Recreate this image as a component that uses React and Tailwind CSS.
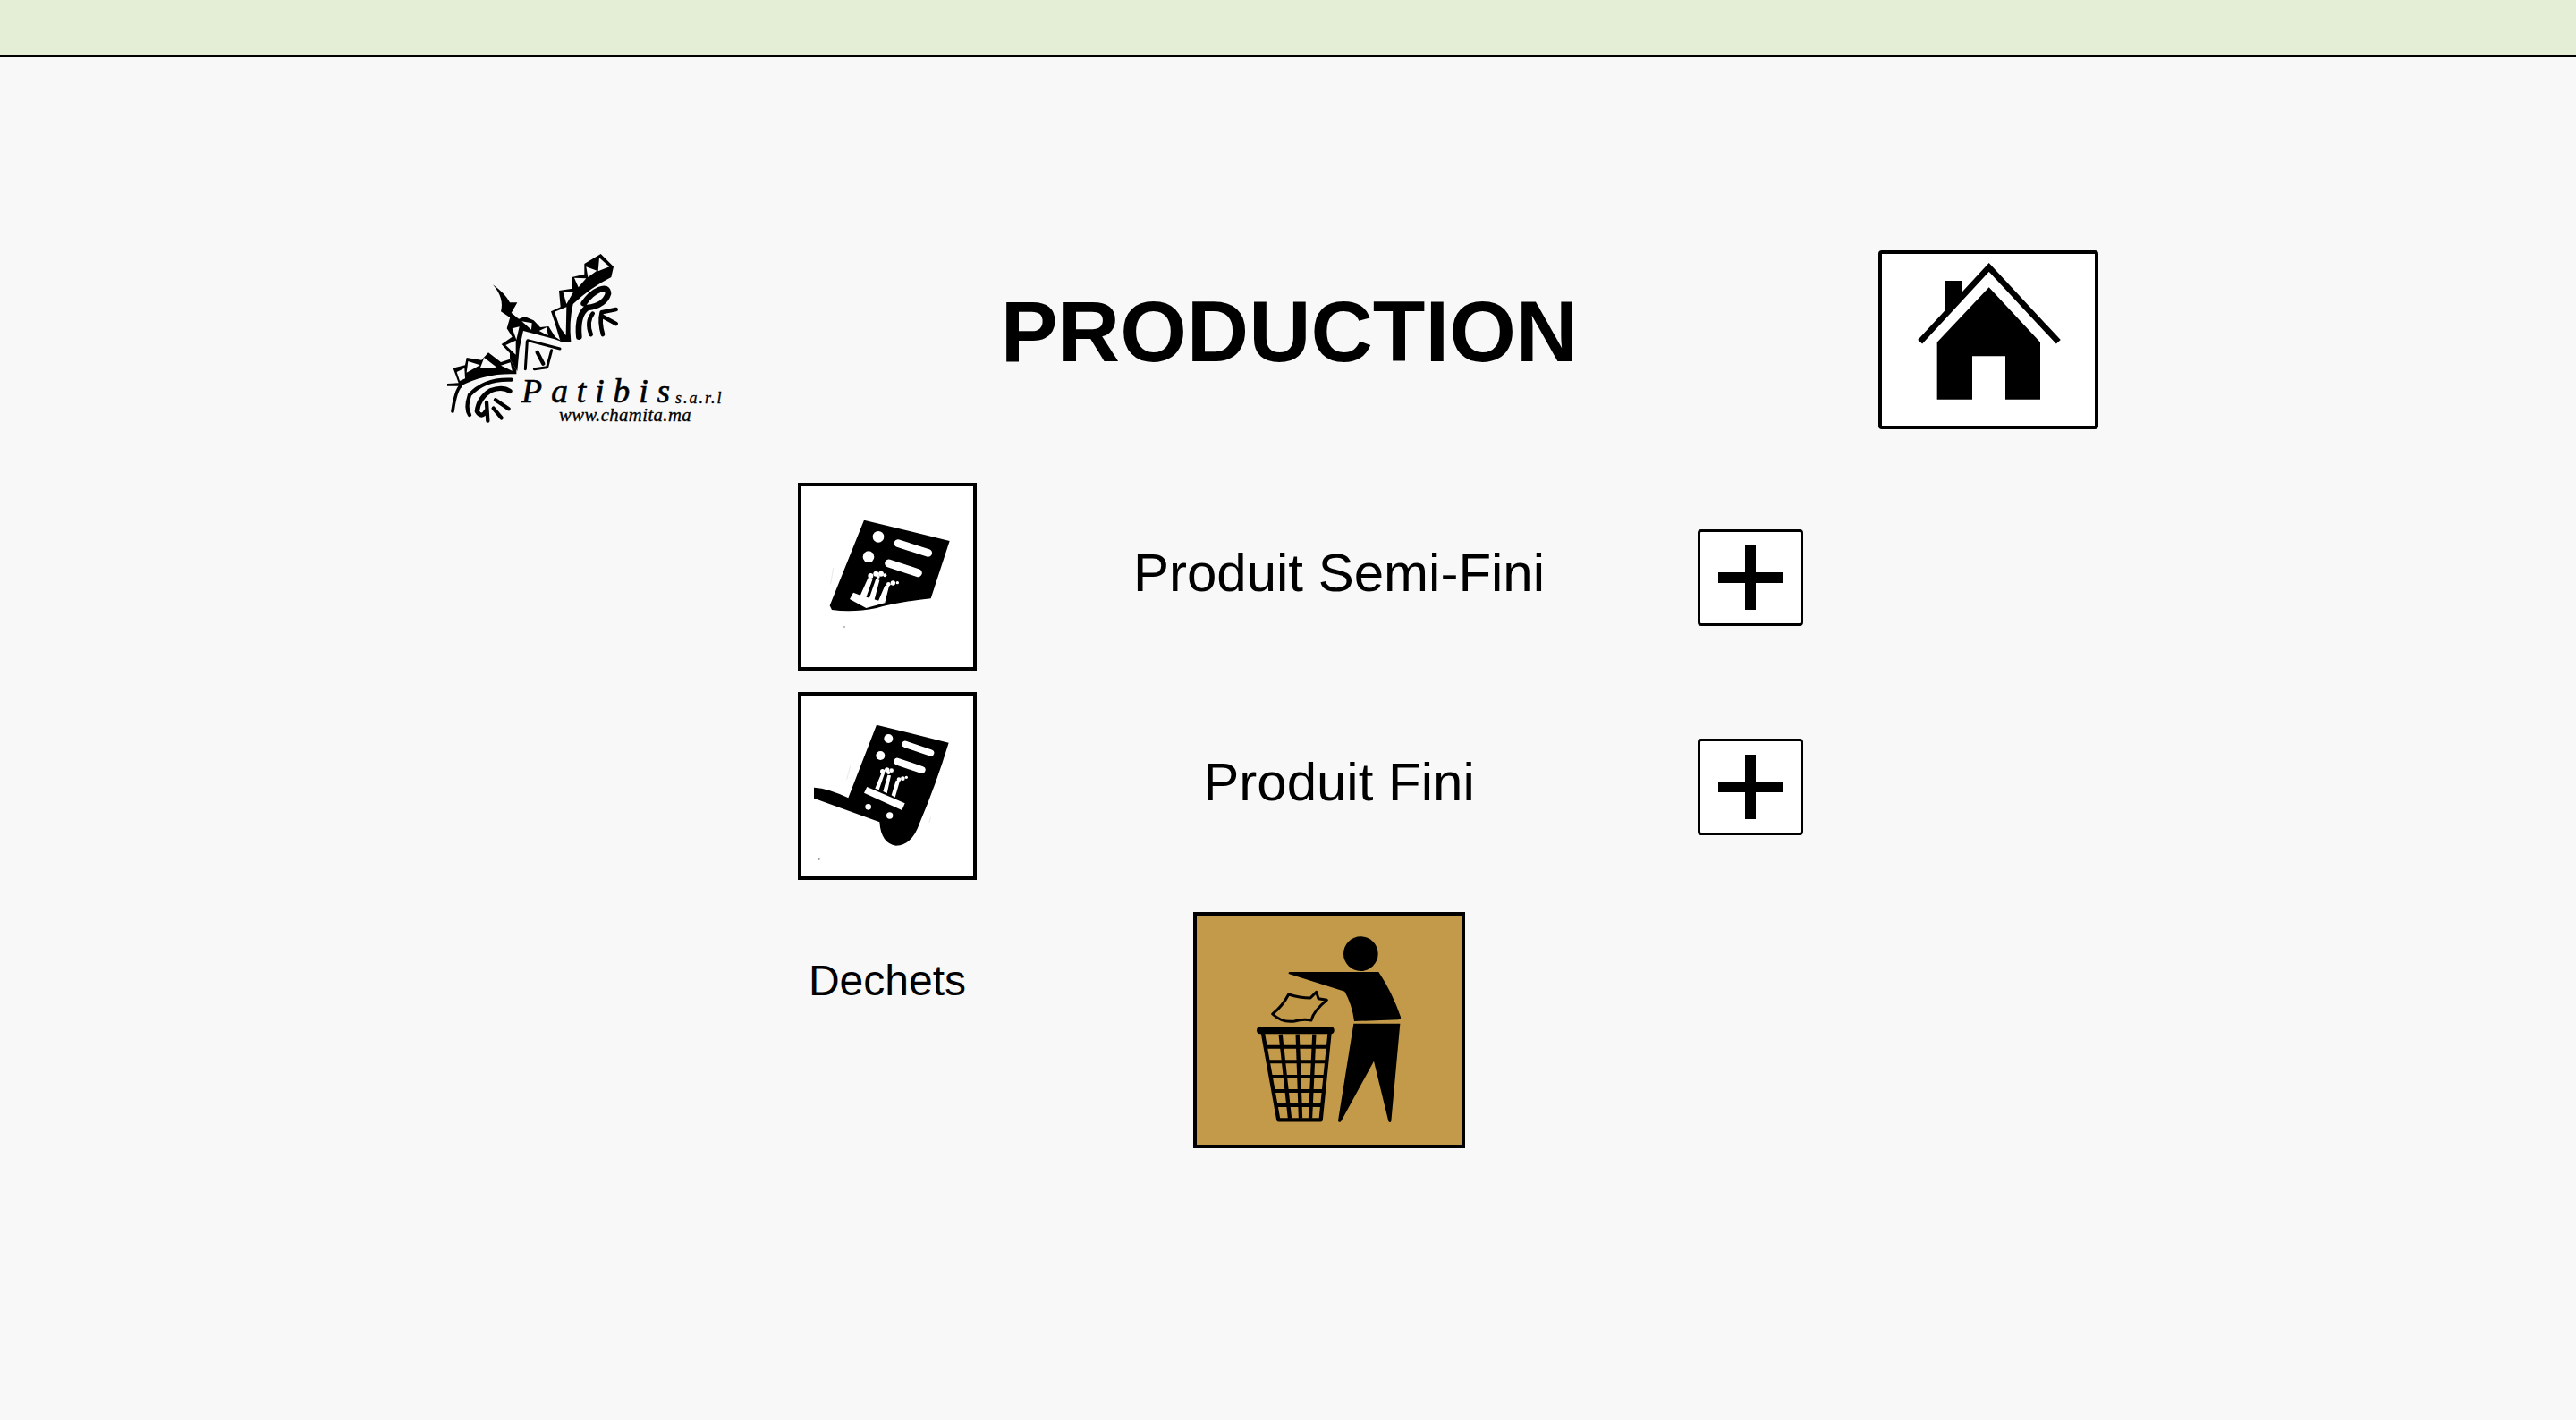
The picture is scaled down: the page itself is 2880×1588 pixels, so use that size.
import React from 'react';

const BG = '#f8f8f8';

function Logo() {
	return (
		<svg viewBox="0 0 1080 720" className="w-[360px] h-[240px] shrink-0">
			{/* upper wing */}
			<path d="M438 265 L470 250 L465 195 L510 188 L508 150 L550 140 L550 105 L605 72 L648 115 L640 150 Q570 185 512 240 Q498 300 505 366 L470 366 L450 300Z" />
			<g fill={BG}>
				<path d="M600 85 L634 115 L596 130Z" />
				<path d="M556 115 L592 128 L562 150Z" />
				<path d="M516 152 L556 154 L530 184Z" />
				<path d="M478 198 L514 198 L490 240Z" />
				<path d="M450 266 L490 250 L488 345 L468 318Z" />
			</g>
			{/* mid chevron */}
			<path d="M305 270 L330 290 L350 282 L380 295 L402 318 L430 315 L452 350 L480 368 L450 358 L345 330 L332 390 L325 465 L300 425 L300 405 L272 375 L308 350 L290 322Z" />
			<g fill={BG}>
				<path d="M308 322 L332 316 L322 360Z" />
				<path d="M286 378 L320 362 L320 410Z" />
				<path d="M340 298 L374 304 L372 326Z" />
				<path d="M398 330 L424 318 L428 346Z" />
			</g>
			<path d="M243 175 Q285 205 300 235 L325 235 L305 270 L330 292 L300 285 L270 265 Q282 220 243 175Z" />
			{/* lower wing */}
			<path d="M90 507 L128 505 L110 455 L150 445 L155 420 L205 428 L228 403 L270 435 L300 425 L322 460 L322 475 Q220 470 135 515 L90 515Z" />
			<g fill={BG}>
				<path d="M160 432 L200 445 L155 470Z" />
				<path d="M214 420 L256 452 L200 456Z" />
				<path d="M270 446 L302 436 L308 464Z" />
				<path d="M122 468 L148 455 L150 490 L132 498Z" />
			</g>
			<g fill="none" stroke="#000" strokeLinecap="round" strokeLinejoin="round">
				{/* right lobes */}
				<path strokeWidth="20" d="M532 350 Q525 275 560 252 Q618 245 630 205 Q628 180 600 192 Q570 205 548 238" />
				<path strokeWidth="14" d="M572 342 Q556 300 578 272 M612 342 Q600 300 608 268 L656 258 M612 282 L656 306" />
				{/* chevron letter */}
				<path strokeWidth="9" d="M360 362 L468 390 M358 365 L352 458 M440 395 L425 452 L382 458" />
				<path strokeWidth="13" d="M392 402 L412 440" />
				{/* lower lobes */}
				<path strokeWidth="11" d="M108 600 Q118 530 135 515" />
				<path strokeWidth="13" d="M305 494 Q215 490 165 545 Q150 590 165 612" />
				<path strokeWidth="16" d="M300 532 Q275 515 235 530 Q195 555 190 600 Q205 625 220 600" />
				<path strokeWidth="13" d="M222 570 L226 632 M252 562 L296 592 M245 590 L272 622" />
			</g>
			<g fontFamily="'Liberation Serif', serif" fontStyle="italic">
				<text x="340" y="570" fontSize="112" stroke="#000" strokeWidth="2" letterSpacing="30">Patibis</text>
				<text x="855" y="572" fontSize="54" stroke="#000" strokeWidth="1" letterSpacing="6">s.a.r.l</text>
				<text x="465" y="632" fontSize="62" stroke="#000" strokeWidth="1" textLength="443">www.chamita.ma</text>
			</g>
		</svg>
	);
}

function HomeIcon() {
	return (
		<svg viewBox="72 72 714 576" className="w-full h-full">
			<path d="M200 367 L431 117 L664 367" fill="none" stroke="#000" strokeWidth="20" />
			<path d="M285 162 H340 V205 L285 265Z" />
			<path d="M257 368 L431 184 L603 368 V560 H486 V415 H375 V560 H257Z" />
		</svg>
	);
}

function SemiFiniIcon() {
	return (
		<svg viewBox="48 42 576 606" className="w-full h-full">
			<path d="M258 155 L545 225 L482 418 Q380 428 300 450 Q220 466 150 456 L143 442Z" />
			<g fill="#fff">
				<circle cx="306" cy="211" r="19" />
				<circle cx="273" cy="278" r="19" />
				<path d="M222 398 L248 408 L330 432 L265 450 L210 420Z" />
				<path d="M245 408 L272 348 L287 352 L265 415Z M275 418 L298 352 L310 356 L292 425Z M305 428 L328 375 L343 372 L328 432Z" />
				<circle cx="280" cy="342" r="9" />
				<circle cx="298" cy="335" r="9" />
				<circle cx="315" cy="335" r="9" />
				<circle cx="328" cy="340" r="6" />
				<circle cx="305" cy="345" r="6" />
				<circle cx="340" cy="370" r="7" />
				<circle cx="355" cy="366" r="8" />
				<circle cx="370" cy="365" r="5" />
			</g>
			<g stroke="#fff" strokeLinecap="round">
				<path strokeWidth="26" d="M372 233 L473 265" />
				<path strokeWidth="27" d="M341 300 L439 332" />
			</g>
			<path d="M155 315 L146 370" stroke="#ddd" strokeWidth="2" />
			<circle cx="192" cy="513" r="3" fill="#aaa" />
		</svg>
	);
}

function FiniIcon() {
	return (
		<svg viewBox="48 744 576 606" className="w-full h-full">
			<path d="M300 842 L542 902 Q500 1040 445 1170 Q420 1245 365 1247 Q315 1240 310 1168 L90 1088 L90 1052 Q140 1055 205 1087Z" />
			<g fill="#fff">
				<circle cx="340" cy="888" r="15" />
				<circle cx="313" cy="945" r="15" />
				<circle cx="272" cy="1117" r="10" />
				<circle cx="344" cy="1146" r="11" />
				<path d="M268 1050 L395 1105 L385 1128 L258 1070Z" />
				<path d="M295 1055 L318 1000 L328 1002 L308 1060Z M322 1065 L337 1010 L348 1012 L335 1072Z M350 1078 L365 1028 L378 1030 L362 1085Z" />
				<circle cx="320" cy="998" r="8" />
				<circle cx="335" cy="993" r="8" />
				<circle cx="350" cy="995" r="7" />
				<circle cx="340" cy="1002" r="6" />
				<circle cx="375" cy="1025" r="7" />
				<circle cx="388" cy="1022" r="7" />
				<circle cx="400" cy="1018" r="5" />
			</g>
			<g stroke="#fff" strokeLinecap="round">
				<path strokeWidth="22" d="M396 907 L482 936" />
				<path strokeWidth="24" d="M370 965 L452 993" />
			</g>
			<path d="M212 980 L200 1025 M482 1152 L476 1170" stroke="#ddd" strokeWidth="2" />
			<circle cx="106" cy="1292" r="4" fill="#999" />
		</svg>
	);
}

function TrashIcon() {
	return (
		<svg viewBox="54 42 888 768" className="w-full h-full">
			<circle cx="604" cy="170" r="58" />
			<path d="M366 231 L664 231 Q710 300 738 382 Q740 390 730 391 L582 396 Q575 340 550 296 L364 238 Q358 234 366 231Z" />
			<path d="M580 404 L736 404 L706 732 Q702 738 697 732 L648 530 L538 732 Q530 738 528 730Z" />
			<g fill="none" stroke="#000">
				<path strokeWidth="24" strokeLinecap="round" d="M267 427 H503" />
				<path strokeWidth="13" strokeLinejoin="round" d="M275 432 L328 727 H470 L500 432" />
				<path strokeWidth="13" d="M335 440 L366 722 M392 440 L402 722 M448 440 L435 722" />
				<path strokeWidth="12" d="M284 482 H493 M292 532 H488 M301 582 H483 M310 630 H478 M319 678 H474" />
				<path strokeWidth="9" strokeLinejoin="round" d="M362 306 Q342 345 308 372 Q340 402 382 396 Q410 388 438 393 Q445 362 490 325 L462 320 L455 298 L435 318 Q400 318 362 306Z" />
			</g>
		</svg>
	);
}

function PlusButton() {
	return (
		<button className="flex items-center justify-center w-[118px] h-[108px] mt-[2px] bg-white border-[3px] border-black rounded-[4px] shrink-0">
			<svg viewBox="0 0 72 72" className="w-[72px] h-[72px]">
				<path d="M30 0 H42 V30 H72 V42 H42 V72 H30 V42 H0 V30 H30Z" />
			</svg>
		</button>
	);
}

function ProductRow({ icon, label }) {
	return (
		<div className="flex items-center h-[210px] ml-[892px]">
			<button className="w-[200px] h-[210px] bg-white border-4 border-black shrink-0">{icon}</button>
			<div className="w-[806px] pb-[8px] pl-[4px] text-center text-[60px] leading-none whitespace-nowrap">{label}</div>
			<PlusButton />
		</div>
	);
}

export default function App() {
	return (
		<div className="min-h-[1588px] bg-[#f8f8f8] text-black font-['Liberation_Sans',Arial,sans-serif]">
			<div className="h-[64px] bg-[#e4edd5] border-b-2 border-black" />
			<div className="flex flex-col pt-[196px]">
				<div className="flex items-center h-[240px] ml-[470px]">
					<Logo />
					<h1 className="w-[1270px] pr-[47px] pb-[18px] text-center text-[96px] font-bold leading-none whitespace-nowrap">PRODUCTION</h1>
					<button className="w-[246px] h-[200px] bg-white border-4 border-black rounded-[4px] shrink-0">
						<HomeIcon />
					</button>
				</div>
				<div className="flex flex-col gap-[24px] mt-[40px]">
					<ProductRow icon={<SemiFiniIcon />} label="Produit Semi-Fini" />
					<ProductRow icon={<FiniIcon />} label="Produit Fini" />
				</div>
				<div className="flex items-start ml-[892px] mt-[36px]">
					<div className="w-[200px] pt-[53px] text-center text-[48px] leading-none">Dechets</div>
					<button className="w-[304px] h-[264px] ml-[242px] bg-[#c39a4a] border-4 border-black">
						<TrashIcon />
					</button>
				</div>
			</div>
		</div>
	);
}
